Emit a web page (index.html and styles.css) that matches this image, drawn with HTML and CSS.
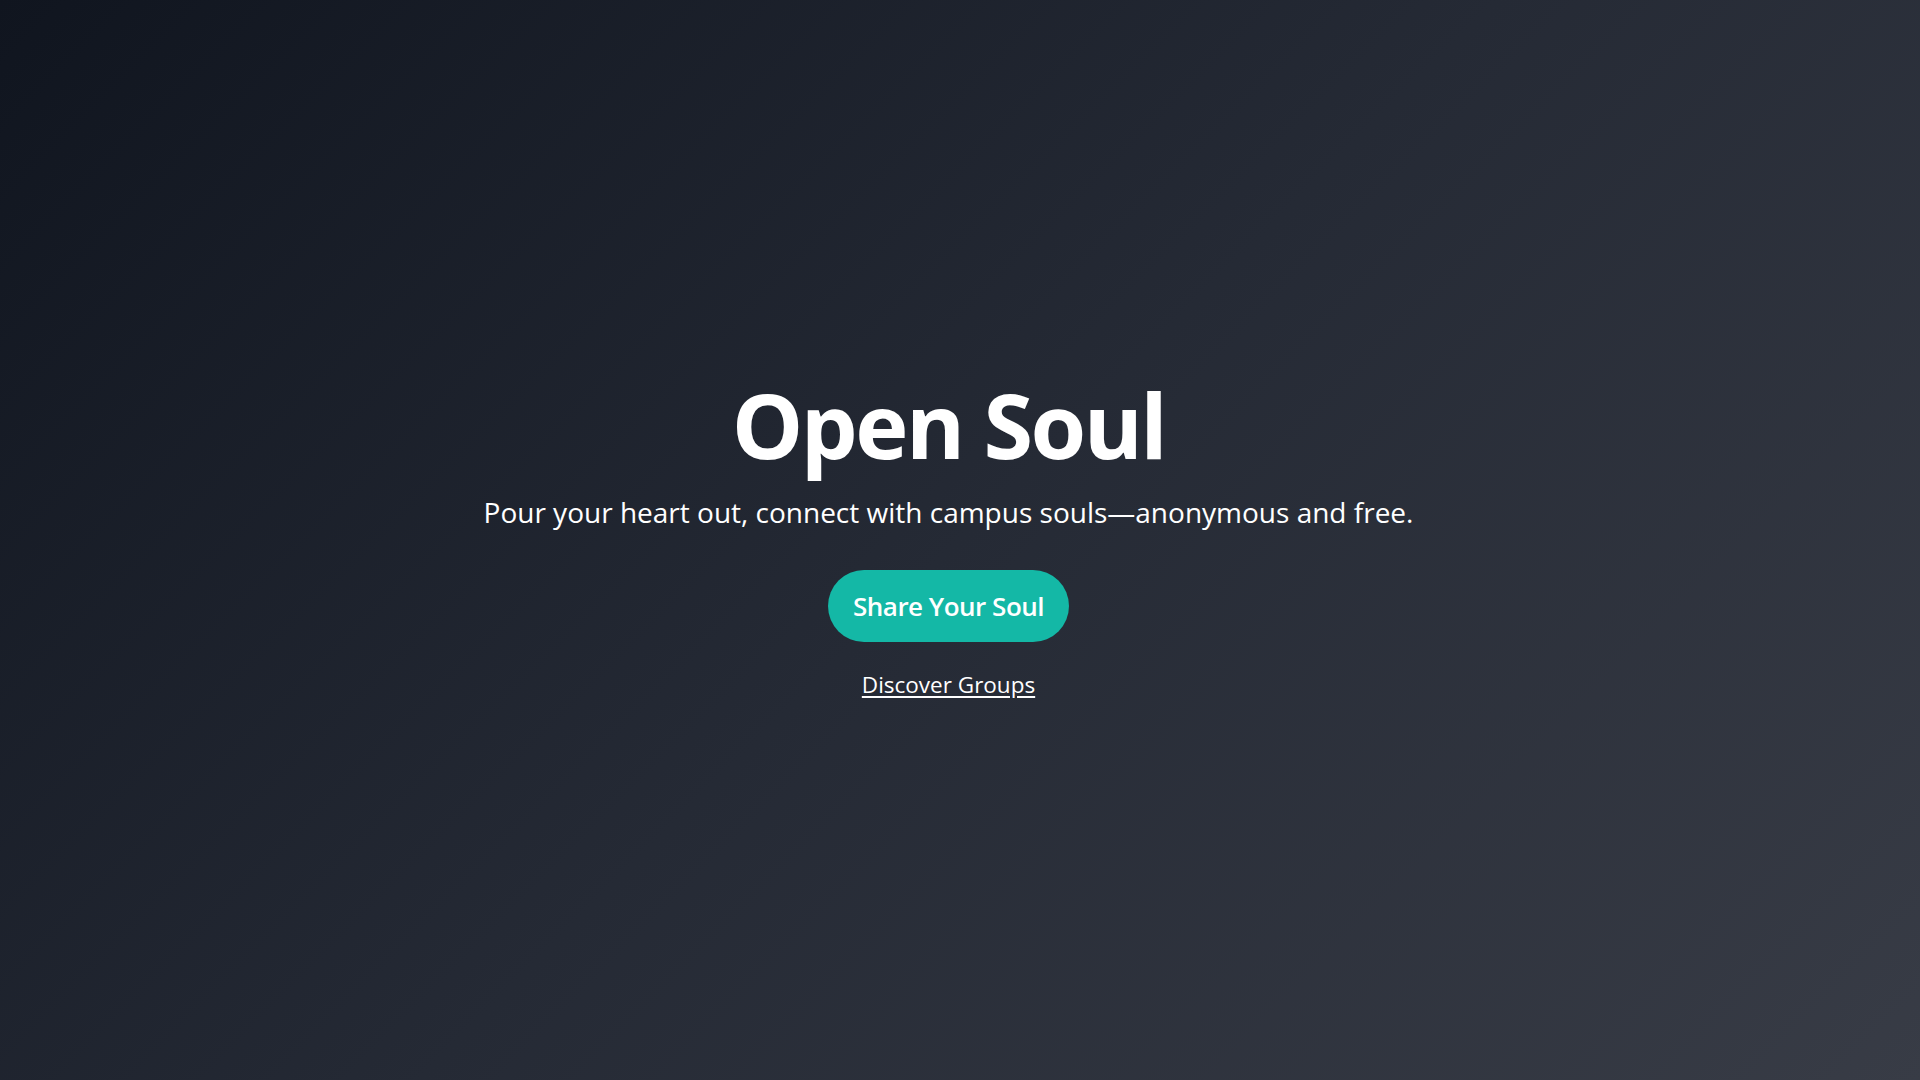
FILE: index.html
```html
<!DOCTYPE html>
<html lang="en">
<head>
<meta charset="utf-8">
<title>Open Soul</title>
<link rel="stylesheet" href="styles.css">
</head>
<body>
<main class="page">
  <section class="hero">
    <h1 class="hero-title">Open Soul</h1>
    <p class="hero-sub">Pour your heart out, connect with campus souls—anonymous and free.</p>
    <a class="hero-btn" href="#share">Share Your Soul</a>
    <a class="hero-link" href="#groups">Discover Groups</a>
  </section>
  <section class="below" id="groups"></section>
</main>
</body>
</html>
```
FILE: styles.css
```css
* { box-sizing: border-box; }
html, body { margin: 0; padding: 0; }
body {
  font-family: "Open Sans", "Noto Sans", sans-serif;
  color: #ffffff;
  background: #2a2e38;
}
.page {
  background: linear-gradient(135deg, #10151f 0%, #252a35 50%, #383c46 100%);
  background-attachment: fixed;
}
.hero {
  height: 100vh;
  padding-right: 23px;
  display: flex;
  flex-direction: column;
  align-items: center;
  justify-content: center;
  text-align: center;
}
.hero-title {
  margin: 0;
  font-size: 90px;
  font-weight: 700;
  line-height: 1.1;
  letter-spacing: -2.5px;
}
.hero-sub {
  margin: 19px 0 0;
  font-size: 28px;
  line-height: 1.4;
}
.hero-btn {
  margin-top: 37px;
  display: inline-flex;
  align-items: center;
  justify-content: center;
  height: 72px;
  padding: 0 25px;
  border-radius: 36px;
  background: #14b8a6;
  color: #ffffff;
  font-size: 26px;
  font-weight: 600;
  text-decoration: none;
  letter-spacing: -0.5px;
}
.hero-link {
  margin-top: 27px;
  margin-bottom: 5px;
  font-size: 22.5px;
  color: #ffffff;
  text-decoration: underline;
  text-underline-offset: 3px;
}
.below {
  height: 1330px;
}
```
